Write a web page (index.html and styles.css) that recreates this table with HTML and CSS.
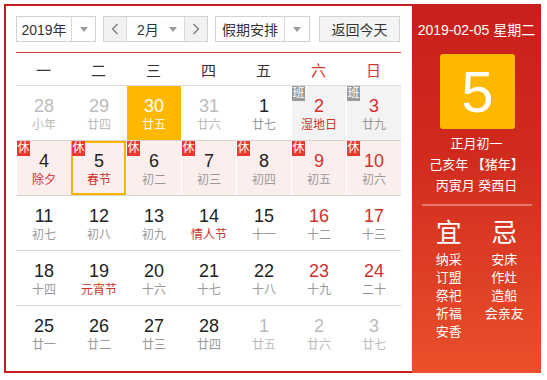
FILE: index.html
```html
<!DOCTYPE html>
<html lang="zh">
<head>
<meta charset="utf-8">
<title>万年历</title>
<link rel="stylesheet" href="styles.css">
</head>
<body>
<div class="wrap">
  <div class="main">
    <div class="toolbar">
      <div class="sel sel-year"><span class="sel-text">2019年</span><span class="sel-arrow"><i class="tri"></i></span></div>
      <div class="sel sel-month">
        <span class="nav"><svg width="8" height="12" viewBox="0 0 8 12"><polyline points="6.5,1 1.5,6 6.5,11" fill="none" stroke="#777" stroke-width="1.2"/></svg></span>
        <span class="month-text">2月</span>
        <span class="month-arrow"><i class="tri"></i></span>
        <span class="nav"><svg width="8" height="12" viewBox="0 0 8 12"><polyline points="1.5,1 6.5,6 1.5,11" fill="none" stroke="#777" stroke-width="1.2"/></svg></span>
      </div>
      <div class="sel sel-hol"><span class="sel-text">假期安排</span><span class="sel-arrow"><i class="tri"></i></span></div>
      <div class="btn">返回今天</div>
    </div>
    <div class="week">
      <span>一</span><span>二</span><span>三</span><span>四</span><span>五</span><span class="we">六</span><span class="we">日</span>
    </div>
    <div class="grid">
      <div class="row">
        <div class="cell other"><b>28</b><small>小年</small></div>
        <div class="cell other"><b>29</b><small>廿四</small></div>
        <div class="cell today"><b>30</b><small>廿五</small></div>
        <div class="cell other"><b>31</b><small>廿六</small></div>
        <div class="cell"><b>1</b><small>廿七</small></div>
        <div class="cell work we"><i class="tag tag-ban">班</i><b>2</b><small class="fest">湿地日</small></div>
        <div class="cell work we"><i class="tag tag-ban">班</i><b>3</b><small>廿九</small></div>
      </div>
      <div class="row">
        <div class="cell rest"><i class="tag">休</i><b>4</b><small class="fest">除夕</small></div>
        <div class="cell rest sel-day"><i class="tag">休</i><b>5</b><small class="fest">春节</small></div>
        <div class="cell rest"><i class="tag">休</i><b>6</b><small>初二</small></div>
        <div class="cell rest"><i class="tag">休</i><b>7</b><small>初三</small></div>
        <div class="cell rest"><i class="tag">休</i><b>8</b><small>初四</small></div>
        <div class="cell rest we"><i class="tag">休</i><b>9</b><small>初五</small></div>
        <div class="cell rest we"><i class="tag">休</i><b>10</b><small>初六</small></div>
      </div>
      <div class="row">
        <div class="cell"><b>11</b><small>初七</small></div>
        <div class="cell"><b>12</b><small>初八</small></div>
        <div class="cell"><b>13</b><small>初九</small></div>
        <div class="cell"><b>14</b><small class="fest">情人节</small></div>
        <div class="cell"><b>15</b><small>十一</small></div>
        <div class="cell we"><b>16</b><small>十二</small></div>
        <div class="cell we"><b>17</b><small>十三</small></div>
      </div>
      <div class="row">
        <div class="cell"><b>18</b><small>十四</small></div>
        <div class="cell"><b>19</b><small class="fest">元宵节</small></div>
        <div class="cell"><b>20</b><small>十六</small></div>
        <div class="cell"><b>21</b><small>十七</small></div>
        <div class="cell"><b>22</b><small>十八</small></div>
        <div class="cell we"><b>23</b><small>十九</small></div>
        <div class="cell we"><b>24</b><small>二十</small></div>
      </div>
      <div class="row last">
        <div class="cell"><b>25</b><small>廿一</small></div>
        <div class="cell"><b>26</b><small>廿二</small></div>
        <div class="cell"><b>27</b><small>廿三</small></div>
        <div class="cell"><b>28</b><small>廿四</small></div>
        <div class="cell other"><b>1</b><small>廿五</small></div>
        <div class="cell other"><b>2</b><small>廿六</small></div>
        <div class="cell other"><b>3</b><small>廿七</small></div>
      </div>
    </div>
  </div>
  <div class="side">
    <div class="side-date">2019-02-05 星期二</div>
    <div class="big-day">5</div>
    <div class="lunar-info">
      <div>正月初一</div>
      <div>己亥年 【猪年】</div>
      <div>丙寅月 癸酉日</div>
    </div>
    <div class="side-line"></div>
    <div class="yiji">
      <div class="yj-col">
        <div class="yj-head">宜</div>
        <div>纳采</div><div>订盟</div><div>祭祀</div><div>祈福</div><div>安香</div>
      </div>
      <div class="yj-col">
        <div class="yj-head">忌</div>
        <div>安床</div><div>作灶</div><div>造船</div><div>会亲友</div>
      </div>
    </div>
  </div>
</div>
</body>
</html>
```
FILE: styles.css
```css
* { box-sizing: border-box; }
html, body { margin: 0; padding: 0; background: #fff; }
body {
  font-family: "Liberation Sans", "Noto Sans CJK SC", sans-serif;
  color: #333;
}
.wrap {
  display: flex;
  width: 537px;
  height: 369px;
  margin: 4px 0 0 4px;
}
.main {
  width: 408px;
  height: 369px;
  border: 2px solid #c3201d;
  border-right: none;
  padding: 10px 10px 0 10px;
  background: #fff;
}
.toolbar {
  display: flex;
  height: 26px;
  font-size: 14px;
}
.sel {
  display: flex;
  border: 1px solid #d2d2d2;
  height: 26px;
  align-items: stretch;
}
.sel-year { width: 80px; }
.sel-year .sel-text { width: 55px; }
.sel-hol { width: 95px; margin-left: 7px; }
.sel-hol .sel-text { width: 69px; }
.sel-text {
  display: flex;
  align-items: center;
  justify-content: center;
  border-right: 1px solid #d8d8d8;
  color: #333;
}
.sel-arrow {
  flex: 1;
  display: flex;
  align-items: center;
  justify-content: center;
}
.tri {
  display: block;
  width: 0; height: 0;
  border-left: 4px solid transparent;
  border-right: 4px solid transparent;
  border-top: 5px solid #999;
}
.sel-month { width: 105px; margin-left: 7px; }
.nav {
  width: 23px;
  background: #f2f2f2;
  display: flex;
  align-items: center;
  justify-content: center;
}
.nav:first-child { border-right: 1px solid #d8d8d8; }
.nav:last-child { border-left: 1px solid #d8d8d8; }
.month-text {
  flex: 1;
  display: flex;
  align-items: center;
  padding-left: 10px;
}
.month-arrow {
  width: 22px;
  display: flex;
  align-items: center;
  justify-content: center;
}
.btn {
  margin-left: 9px;
  width: 81px;
  height: 26px;
  border: 1px solid #d2d2d2;
  background: #f4f4f4;
  display: flex;
  align-items: center;
  justify-content: center;
  color: #333;
}
.week {
  margin-top: 10px;
  width: 385px;
  height: 34px;
  border-top: 1px solid #d9403a;
  border-bottom: 1px solid #dcdcdc;
  display: grid;
  grid-template-columns: repeat(7, 55px);
  align-items: center;
  font-size: 15px;
  text-align: center;
  color: #333;
}
.week .we { color: #d33a32; }
.grid { width: 385px; }
.row {
  display: grid;
  grid-template-columns: repeat(7, 55px);
  height: 55px;
  border-bottom: 1px solid #d4d4d4;
}
.row.last { border-bottom: none; }
.cell {
  position: relative;
  height: 54px;
  border-left: 1px solid #fff;
  display: flex;
  flex-direction: column;
  align-items: center;
  padding-top: 10px;
}
.cell b {
  font-weight: normal;
  font-size: 18px;
  line-height: 20px;
  color: #222;
}
.cell small {
  font-size: 12px;
  line-height: 16px;
  margin-top: 1px;
  color: #999;
}
.cell.we b { color: #d0312c; }
.cell.other b { color: #bbb; }
.cell.other small { color: #bbb; }
.cell small.fest { color: #d0312c; }
.cell.today { background: #ffb800; }
.cell.today b, .cell.today small { color: #fff; }
.cell.work { background: #f3f3f3; }
.cell.rest { background: #fdeeee; }
.cell.sel-day { outline: 2px solid #f5b400; outline-offset: -2px; }
.tag {
  position: absolute;
  left: 0;
  top: 0;
  width: 13px;
  height: 15px;
  background: #e83a2f;
  color: #fff;
  font-style: normal;
  font-size: 12px;
  line-height: 15px;
  text-align: center;
}
.tag-ban { background: #9a9a9a; }
.side {
  width: 129px;
  height: 369px;
  background: linear-gradient(180deg, #c91f1d 0%, #d02a1e 40%, #e9502a 100%);
  color: #fff;
  display: flex;
  flex-direction: column;
  align-items: center;
  padding-top: 17px;
}
.side-date {
  font-size: 14px;
  line-height: 18px;
}
.big-day {
  margin-top: 15px;
  width: 75px;
  height: 75px;
  border-radius: 3px;
  background: #ffb800;
  color: #fff;
  font-size: 58px;
  line-height: 75px;
  text-align: center;
  margin-left: 2px;
}
.lunar-info {
  margin-top: 4px;
  font-size: 13px;
  line-height: 21px;
  text-align: center;
}
.side-line {
  margin-top: 8px;
  width: 110px;
  height: 2px;
  background: rgba(255, 255, 255, 0.35);
}
.yiji {
  display: flex;
  width: 111px;
  margin-top: 12px;
}
.yj-col {
  flex: 1;
  display: flex;
  flex-direction: column;
  align-items: center;
  font-size: 13px;
  line-height: 18px;
}
.yj-head {
  font-size: 26px;
  line-height: 30px;
  margin-bottom: 3px;
  font-weight: normal;
}
```
